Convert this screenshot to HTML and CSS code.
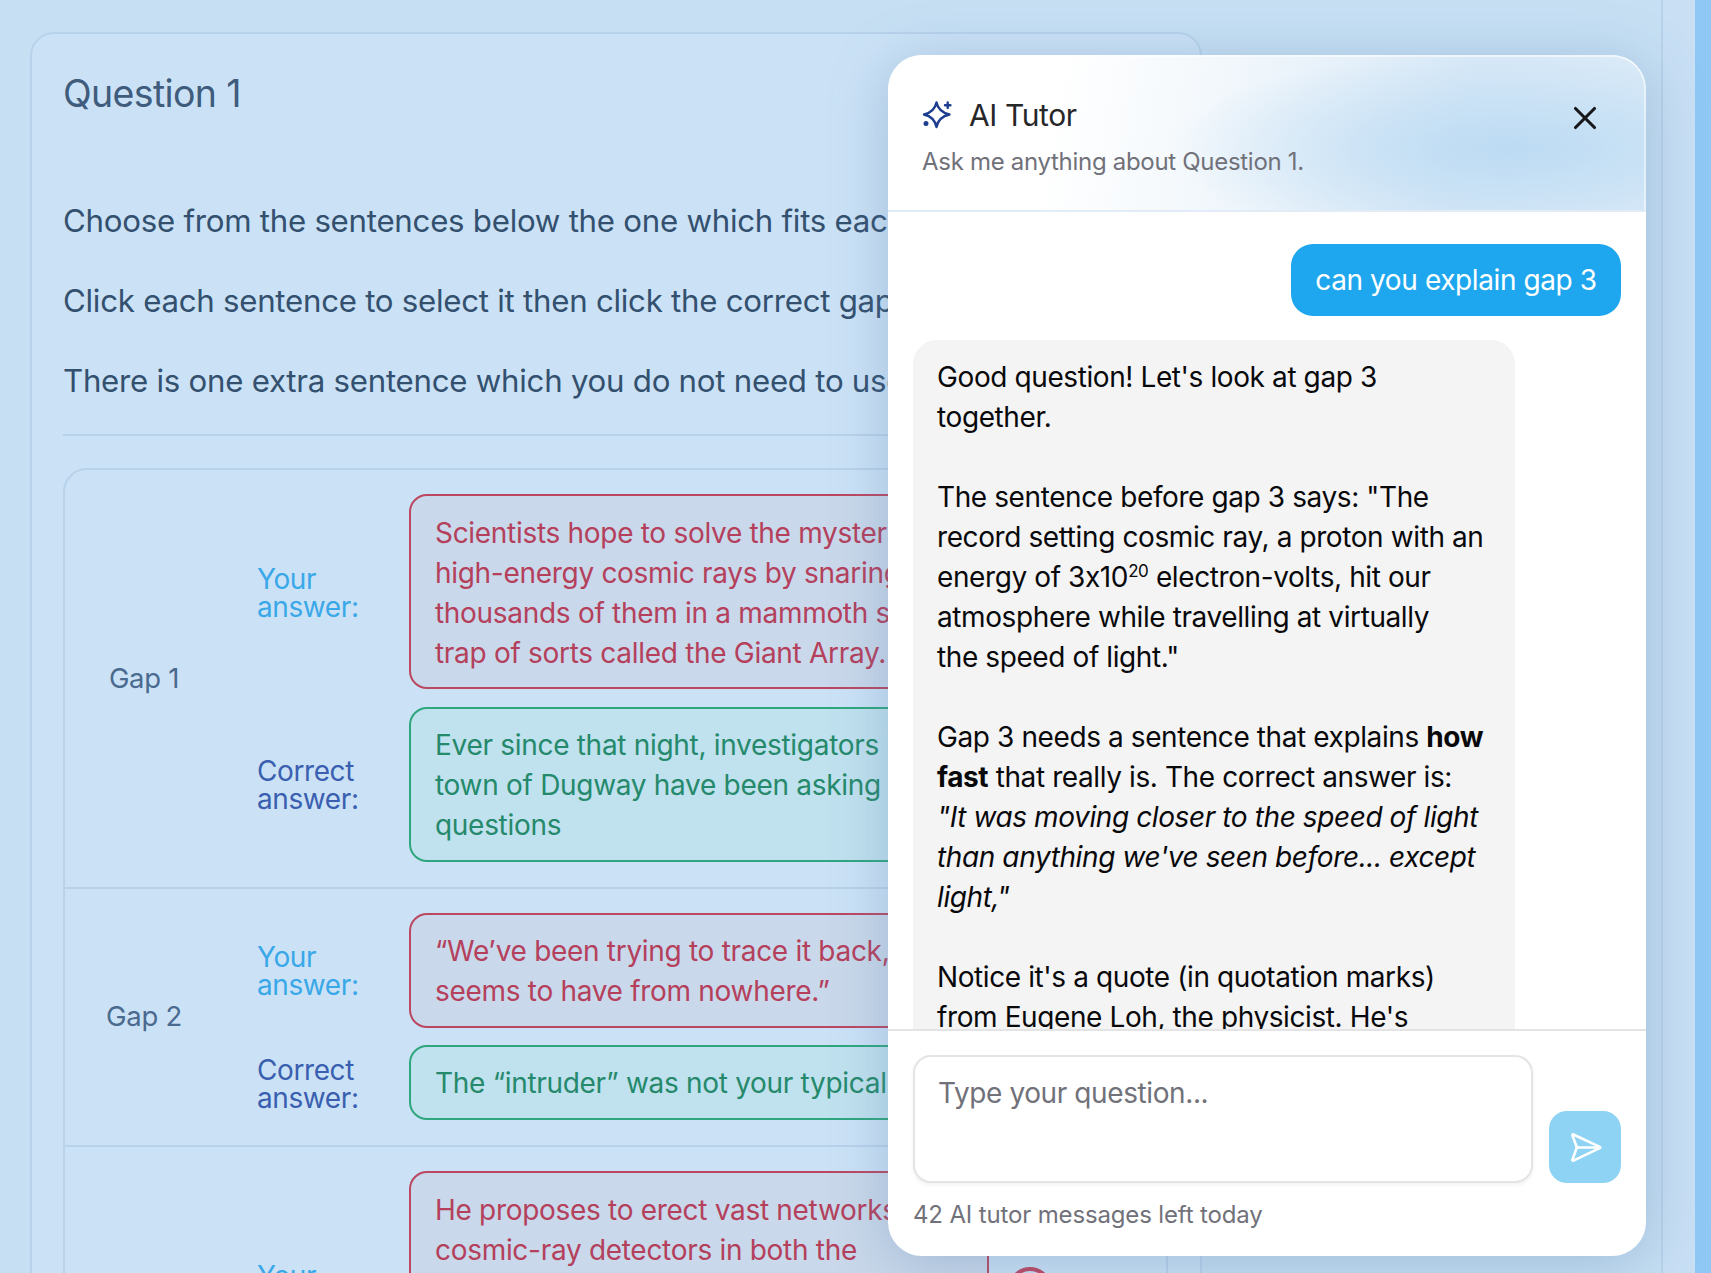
FILE: index.html
```html
<!DOCTYPE html>
<html lang="en">
<head>
<meta charset="utf-8">
<title>AI Tutor</title>
<link rel="stylesheet" href="styles.css">
</head>
<body>
<div class="page">
  <main class="main">
    <section class="card">
      <h1 class="card-title">Question 1</h1>
      <p class="intro">Choose from the sentences below the one which fits each gap.</p>
      <p class="intro">Click each sentence to select it then click the correct gap.</p>
      <p class="intro">There is one extra sentence which you do not need to use.</p>
      <hr class="rule">
      <div class="table">
        <div class="gap-row">
          <div class="gap-name">Gap 1</div>
          <div class="answers">
            <div class="answer">
              <div class="label label-yours">Your answer:</div>
              <div class="box box-wrong">Scientists hope to solve the mystery of<br>high-energy cosmic rays by snaring<br>thousands of them in a mammoth subatomic<br>trap of sorts called the Giant Array.</div>
            </div>
            <div class="answer">
              <div class="label label-correct">Correct answer:</div>
              <div class="box box-right">Ever since that night, investigators in the<br>town of Dugway have been asking themselves<br>questions</div>
            </div>
          </div>
        </div>
        <div class="gap-row">
          <div class="gap-name">Gap 2</div>
          <div class="answers">
            <div class="answer">
              <div class="label label-yours">Your answer:</div>
              <div class="box box-wrong">“We’ve been trying to trace it back, but it<br>seems to have from nowhere.”</div>
            </div>
            <div class="answer">
              <div class="label label-correct">Correct answer:</div>
              <div class="box box-right">The “intruder” was not your typical particle.</div>
            </div>
          </div>
        </div>
        <div class="gap-row">
          <div class="gap-name">Gap 3</div>
          <div class="answers">
            <div class="answer">
              <div class="label label-yours">Your answer:</div>
              <div class="box box-wrong">He proposes to erect vast networks of<br>cosmic-ray detectors in both the<br>northern and southern hemispheres<br>to catch more of these particles<br>as they arrive.</div>
              <svg class="status" viewBox="0 0 44 44" fill="none" stroke="#bf4562" stroke-width="4"><circle cx="22" cy="22" r="20"/><path d="M15 15l14 14M29 15L15 29"/></svg>
            </div>
          </div>
        </div>
      </div>
    </section>
  </main>
  <div class="rail"></div>
  <div class="strip"></div>

  <aside class="tutor">
    <header class="tutor-head">
      <div class="tutor-title-row">
        <svg class="spark" viewBox="0 0 30 30" fill="none" stroke="#1e3f8f" stroke-width="2.4" stroke-linejoin="round" stroke-linecap="round">
          <path d="M14.500 2.500Q16.500 12 27.500 14.500 16.500 17 14.500 27 12.500 17 2 14.500 12.500 12 14.500 2.500z"/>
          <path d="M25.700 2.500v5.400M23 5.200h5.400"/>
          <circle cx="4" cy="23.500" r="1.300" fill="#1e3f8f"/>
        </svg>
        <h2 class="tutor-title">AI Tutor</h2>
      </div>
      <p class="tutor-sub">Ask me anything about Question 1.</p>
      <button class="close" type="button" aria-label="Close">
        <svg viewBox="0 0 24 24" fill="none" stroke="#18181b" stroke-width="2" stroke-linecap="round"><path d="M18 6L6 18M6 6l12 12"/></svg>
      </button>
    </header>
    <div class="messages">
      <div class="bubble-user">can you explain gap 3</div>
      <div class="bubble-ai">
        <p>Good question! Let's look at gap 3 together.</p>
        <p>The sentence before gap 3 says: "The record setting cosmic ray, a proton with an energy of 3x10<sup>20</sup> electron-volts, hit our atmosphere while travelling at virtually<br>the speed of light."</p>
        <p>Gap 3 needs a sentence that explains <strong>how fast</strong> that really is. The correct answer is:<br><em>"It was moving closer to the speed of light than anything we've seen before... except light,"</em></p>
        <p>Notice it's a quote (in quotation marks) from Eugene Loh, the physicist. He's explaining just how close it came.</p>
      </div>
    </div>
    <footer class="composer">
      <div class="composer-row">
        <textarea class="question" placeholder="Type your question..."></textarea>
        <button class="send" type="button" aria-label="Send">
          <svg viewBox="0 0 24 24" fill="none" stroke="#fff" stroke-width="1.8" stroke-linecap="round" stroke-linejoin="round"><path d="M3.714 3.048a.498.498 0 0 0-.683.627l2.843 7.627a2 2 0 0 1 0 1.396l-2.843 7.627a.498.498 0 0 0 .683.627l18-8.500a.5.5 0 0 0 0-.904z"/><path d="M6 12h16"/></svg>
        </button>
      </div>
      <div class="quota">42 AI tutor messages left today</div>
    </footer>
  </aside>
</div>
</body>
</html>
```

FILE: styles.css
```css
* { box-sizing: border-box; }
html, body { margin: 0; padding: 0; height: 100%; overflow: hidden; }
body { font-family: Inter, "Liberation Sans", sans-serif; background: #c6dff4; }
.page { position: relative; display: flex; width: 1711px; height: 1273px; overflow: hidden; }

.main { width: 1661px; flex: none; padding: 32px 0 0 30px; background: #c6dff3; }
.rail { width: 34px; flex: none; border-left: 2px solid #b8d2ea; background: #c8dff4; }
.strip { width: 16px; flex: none; background: #90c8f5; }

.card { width: 1172px; height: 1500px; padding: 36px 32px 0 31px; border: 2px solid #b8d2ea; border-radius: 24px; background: #cbe2f6; }
.card-title { margin: 0 0 83px; font-size: 37.5px; line-height: 48px; font-weight: 400; letter-spacing: -0.65px; color: #3f5c7c; }
.intro { margin: 0 0 40px; font-size: 31.25px; line-height: 40px; letter-spacing: -0.27px; color: #33506f; white-space: nowrap; }
.rule { height: 2px; margin: -7px 0 32px; border: 0; background: #b8d2ea; }

.table { border: 2px solid #b8d2ea; border-radius: 24px; }
.gap-row { display: flex; align-items: center; padding: 24px 0 25px; border-bottom: 2px solid #b8d2ea; }
.gap-name { width: 158px; flex: none; text-align: center; font-size: 27.5px; color: #4a6a8f; letter-spacing: -0.3px; }
.answers { display: flex; flex-direction: column; gap: 17.5px; }
.answer { display: flex; align-items: center; }
.label { width: 152px; margin-left: 34px; flex: none; font-size: 28px; line-height: 28px; padding: 2px 40px 0 0; letter-spacing: -0.4px; }
.label-yours { color: #3aa8e8; }
.label-correct { color: #3a5fb0; }
.box { width: 580px; flex: none; padding: 16.5px 24px 14.5px; border: 2px solid; border-radius: 18px; font-size: 28px; line-height: 40px; letter-spacing: -0.3px; white-space: nowrap; overflow: hidden; }
.box-wrong { border-color: #bb4761; color: #b4405c; background: #c9d8ea; }
.box-right { padding: 16px 24px 15px; border-color: #2fa67e; color: #25896b; background: #c0e1ee; }
.status { width: 44px; height: 44px; margin-left: 19px; flex: none; }

.tutor { position: absolute; left: 888px; top: 55px; width: 758px; height: 1201px; display: flex; flex-direction: column; border-radius: 34px; background: #fff; overflow: hidden; box-shadow: 0 8px 56px rgba(90, 130, 175, .36); }
.tutor-head { position: relative; height: 157px; flex: none; padding: 40px 34px 0; border-bottom: 2px solid #e1ecf7; border-radius: 34px 34px 0 0; box-shadow: inset 0 2px 0 rgba(255, 255, 255, .55), inset -2px 0 0 rgba(255, 255, 255, .45);
  background:
    radial-gradient(ellipse 340px 100px at 82% 60%, #bcdbf3 0%, rgba(188, 219, 243, 0) 100%),
    linear-gradient(100deg, #fff 22%, #f3f8fc 42%, #d9e9f7 75%, #dcebf8 100%); }
.tutor-title-row { display: flex; align-items: center; gap: 17px; }
.spark { width: 30px; height: 30px; flex: none; }
.tutor-title { margin: 0; font-size: 30px; line-height: 40px; font-weight: 400; letter-spacing: -0.4px; color: #27272a; }
.tutor-sub { margin: 10.5px 0 0; font-size: 24px; line-height: 32px; letter-spacing: -0.3px; color: #71717a; }
.close { position: absolute; right: 42px; top: 44px; width: 38px; height: 38px; padding: 0; border: 0; background: none; }
.close svg { display: block; width: 38px; height: 38px; }

.messages { flex: 1; min-height: 0; overflow: hidden; padding: 32px 25px 0; display: flex; flex-direction: column; align-items: flex-start; gap: 24px; }
.bubble-user { align-self: flex-end; width: 330px; height: 72px; line-height: 72px; text-align: center; border-radius: 22px; background: #1ea7ee; color: #fff; font-size: 28px; letter-spacing: -0.4px; flex: none; }
.bubble-ai { width: 602px; flex: none; padding: 17px 24px 24px; border-radius: 24px; background: #f4f4f5; color: #09090b; font-size: 28px; line-height: 40px; letter-spacing: -0.4px; }
.bubble-ai p { margin: 0 0 40px; }
.bubble-ai sup { font-size: 17px; line-height: 0; }

.composer { height: 227px; flex: none; padding: 24px 25px 0; border-top: 2px solid #e4e4e7; }
.composer-row { display: flex; align-items: flex-end; gap: 16px; }
.question { width: 620px; height: 128px; padding: 17px 23px 15px; border: 2px solid #e4e4e7; border-radius: 18px; resize: none; font: inherit; font-size: 28px; line-height: 38px; letter-spacing: -0.4px; box-shadow: 0 2px 4px rgba(0, 0, 0, .06); outline: none; }
.question::placeholder { color: #71717a; opacity: 1; }
.send { width: 72px; height: 72px; display: flex; align-items: center; justify-content: center; padding: 0; border: 0; border-radius: 18px; background: #8fd3f4; }
.send svg { width: 35px; height: 35px; }
.quota { margin-top: 16px; font-size: 24px; line-height: 32px; letter-spacing: -0.15px; color: #71717a; }
```
